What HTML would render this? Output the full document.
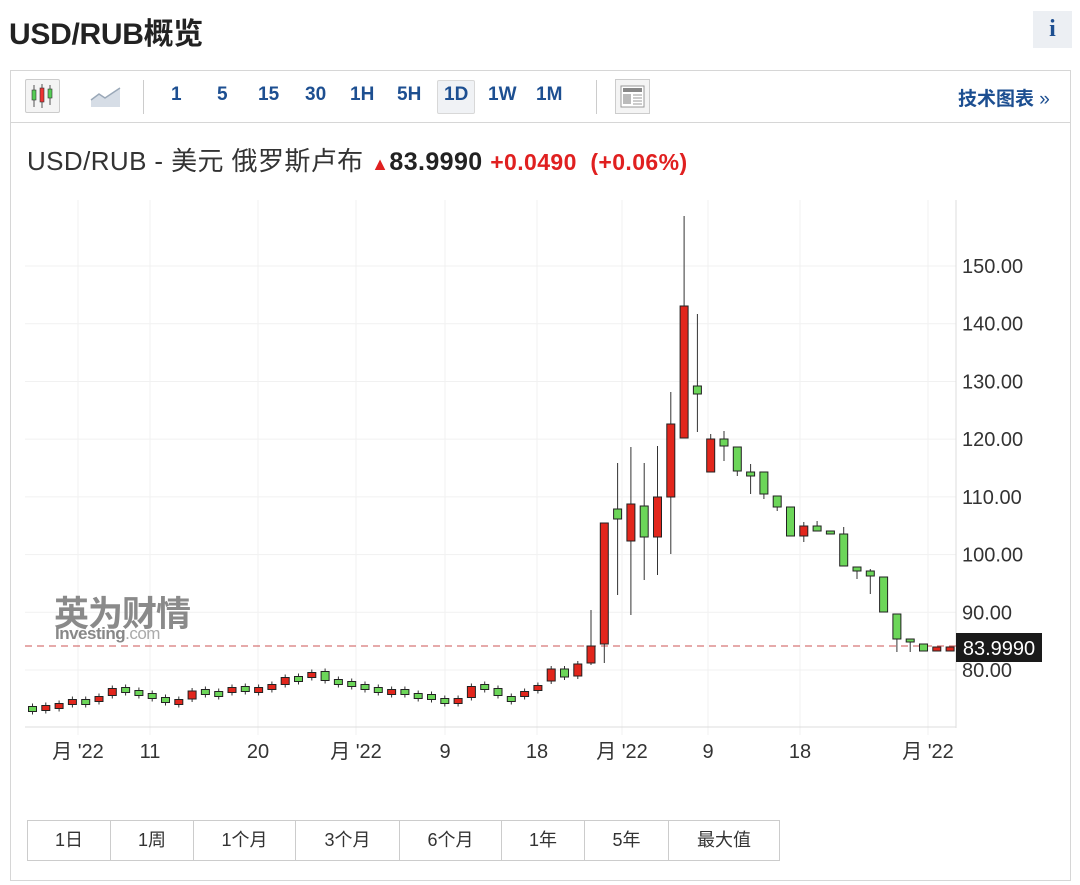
<!DOCTYPE html>
<html><head><meta charset="utf-8">
<style>
*{margin:0;padding:0;box-sizing:border-box}
body{width:1080px;height:885px;background:#fff;font-family:"Liberation Sans","Noto Sans CJK SC",sans-serif;position:relative;overflow:hidden;color:#222}
.abs{position:absolute}
.title{left:9px;top:9px;font-size:30px;font-weight:bold;color:#222;letter-spacing:-0.3px}
.info{left:1033px;top:11px;width:39px;height:37px;background:#eceff3;color:#1d4f91;font:bold 24px "Liberation Serif",serif;text-align:center;line-height:37px}
.box{left:10px;top:70px;width:1061px;height:811px;border:1px solid #d6d6d6}
.tb{left:11px;top:71px;width:1059px;height:52px;border-bottom:1px solid #d6d6d6}
.tf{top:84px;font-size:19px;font-weight:bold;color:#1d4f91}
.sep{top:80px;width:1px;height:34px;background:#ccc}
.btns{left:27px;top:820px;height:41px;display:flex;border:1px solid #ccc}
.btns div{border-right:1px solid #ccc;text-align:center;line-height:39px;font-size:18px;color:#333}
.btns div:last-child{border-right:none}
</style></head><body>
<div class="abs title">USD/RUB概览</div>
<div class="abs info">i</div>
<div class="abs box"></div>
<div class="abs tb"></div>
<div class="abs" style="left:25px;top:79px;width:35px;height:34px;border:1px solid #ccc;background:#f4f4f4;border-radius:2px"></div>
<svg class="abs" style="left:25px;top:79px" width="35" height="34">
<line x1="9" y1="6" x2="9" y2="28" stroke="#555"/><rect x="7" y="11" width="4" height="10" fill="#5c5" stroke="#333" stroke-width=".6"/>
<line x1="17" y1="5" x2="17" y2="29" stroke="#555"/><rect x="15" y="9" width="4" height="14" fill="#e33" stroke="#333" stroke-width=".6"/>
<line x1="25" y1="6" x2="25" y2="26" stroke="#555"/><rect x="23" y="10" width="4" height="9" fill="#5c5" stroke="#333" stroke-width=".6"/>
</svg>
<svg class="abs" style="left:90px;top:86px" width="32" height="22"><path d="M1 14 L9 8 L15 12 L30 2 L30 21 L1 21Z" fill="#d6dde6"/><path d="M1 14 L9 8 L15 12 L30 2" stroke="#9aa8b8" fill="none" stroke-width="1.5"/></svg>
<div class="abs sep" style="left:143px"></div>
<div class="abs tf" style="left:171px">1</div>
<div class="abs tf" style="left:217px">5</div>
<div class="abs tf" style="left:258px">15</div>
<div class="abs tf" style="left:305px">30</div>
<div class="abs tf" style="left:350px">1H</div>
<div class="abs tf" style="left:397px">5H</div>
<div class="abs" style="left:437px;top:80px;width:38px;height:34px;background:#f0f2f5;border:1px solid #d8d8d8;border-radius:2px"></div>
<div class="abs tf" style="left:444px">1D</div>
<div class="abs tf" style="left:488px">1W</div>
<div class="abs tf" style="left:536px">1M</div>
<div class="abs sep" style="left:596px"></div>
<svg class="abs" style="left:615px;top:79px" width="35" height="35"><rect x=".5" y=".5" width="34" height="34" fill="#f4f4f4" stroke="#ccc"/><rect x="6" y="7" width="23" height="21" fill="#fff" stroke="#999"/><rect x="8" y="9" width="19" height="4" fill="#888"/><rect x="8" y="15" width="8" height="10" fill="#bbb"/><path d="M18 16h9M18 19h9M18 22h9M18 25h9" stroke="#999"/></svg>
<div class="abs" style="left:958px;top:84px;font-size:19px;font-weight:bold;color:#1d4f91">技术图表 <span style="font-weight:normal">»</span></div>
<div class="abs" style="left:27px;top:141px;font-size:26px;color:#333;white-space:nowrap;letter-spacing:0.4px">USD/RUB - 美元 俄罗斯卢布 <span style="color:#e02020;font-size:18px">&#9650;</span><b style="color:#222;font-size:25px">83.9990</b> <b style="color:#e02020;font-size:23px">+0.0490 &nbsp;(+0.06%)</b></div>
<svg id="ch" class="abs" style="left:0;top:0" width="1080" height="885"></svg>
<div class="abs" style="left:54px;top:586px;font-size:35px;font-weight:bold;color:#8a8a8a;letter-spacing:-1px">英为财情</div>
<div class="abs" style="left:55px;top:624px;font-size:17px;font-weight:bold;color:#888;letter-spacing:-0.5px">Investing<span style="font-weight:normal;color:#aaa">.com</span></div>
<div class="abs btns">
<div style="width:83px">1日</div><div style="width:83px">1周</div><div style="width:102px">1个月</div><div style="width:104px">3个月</div><div style="width:102px">6个月</div><div style="width:83px">1年</div><div style="width:84px">5年</div><div style="width:110px">最大值</div>
</div>
<script>
var s='';
function Y(v){return 670-(v-80)*5.771;}
[80,90,100,110,120,130,140,150].forEach(function(v){var y=Y(v);s+='<line x1="25" x2="956" y1="'+y+'" y2="'+y+'" stroke="#f1f1f1"/><text x="962" y="'+(y+7)+'" font-size="20" fill="#333" font-family="Liberation Sans">'+v.toFixed(2)+'</text>';});
var xs=[78,150,258,356,445,537,622,708,800,928],lb=["月 '22","11","20","月 '22","9","18","月 '22","9","18","月 '22"];
xs.forEach(function(x,i){s+='<line x1="'+x+'" x2="'+x+'" y1="200" y2="735" stroke="#f1f1f1"/><text x="'+x+'" y="758" font-size="20" fill="#333" text-anchor="middle" font-family="Liberation Sans,Noto Sans CJK SC">'+lb[i]+'</text>';});
s+='<line x1="956" x2="956" y1="200" y2="728" stroke="#ddd"/><line x1="25" x2="956" y1="727" y2="727" stroke="#ddd"/>';
s+='<line x1="25" x2="956" y1="646" y2="646" stroke="#c55" stroke-dasharray="7,5"/>';
var sm=[[709,'g'],[708,'r'],[706,'r'],[702,'r'],[702,'g'],[699,'r'],[692,'r',7],[690,'g'],[693,'g'],[696,'g'],[700,'g'],[702,'r'],[695,'r',8],[692,'g'],[694,'g'],[690,'r'],[689,'g'],[690,'r'],[687,'r'],[681,'r',7],[679,'g'],[675,'r'],[676,'g',9],[682,'g'],[684,'g'],[687,'g'],[690,'g'],[692,'r'],[692,'g'],[696,'g'],[697,'g'],[701,'g'],[701,'r'],[692,'r',11],[687,'g'],[692,'g',7],[699,'g'],[694,'r'],[688,'r'],[675,'r',12],[673,'g',8],[670,'r',12]];
var c=[];
sm.forEach(function(d,i){var h=(d[2]||5)/2;c.push([32.5+i*13.3,d[0]-h,d[0]+h,d[0]-h-3,d[0]+h+3,d[1]]);});
var big=[[646,663,610,665,'r'],[523,644,523,663,'r'],[509,519,463,595,'g'],[504,541,447,615,'r'],[506,537,463,580,'g'],[497,537,446,575,'r'],[424,497,392,554,'r'],[306,438,216,438,'r'],[386,394,314,432,'g'],[439,472,434,472,'r'],[439,446,431,461,'g'],[447,471,447,476,'g'],[472,476,464,494,'g'],[472,494,472,499,'g'],[496,507,496,511,'g'],[507,536,507,536,'g'],[526,536,522,542,'r'],[526,531,521,531,'g'],[531,534,531,534,'g'],[534,566,527,566,'g'],[567,571,567,579,'g'],[571,576,569,594,'g'],[577,612,577,612,'g'],[614,639,614,652,'g'],[639,642,639,652,'g'],[644,651,644,651,'g'],[647,651,647,651,'r'],[647,651,647,651,'r']];
big.forEach(function(d,i){c.push([591+i*13.3,d[0],d[1],d[2],d[3],d[4]]);});
c.forEach(function(d){var x=d[0];s+='<line x1="'+x+'" x2="'+x+'" y1="'+d[3]+'" y2="'+d[4]+'" stroke="#333"/><rect x="'+(x-4)+'" y="'+d[1]+'" width="8" height="'+Math.max(d[2]-d[1],3)+'" fill="'+(d[5]=='r'?'#e2261c':'#6cd659')+'" stroke="#222" stroke-width="1"/>';});
s+='<rect x="956" y="633" width="86" height="29" fill="#1a1a1a"/><text x="999" y="655" font-size="20" fill="#fff" text-anchor="middle" font-family="Liberation Sans">83.9990</text>';
document.getElementById('ch').innerHTML=s;
</script>
</body></html>
